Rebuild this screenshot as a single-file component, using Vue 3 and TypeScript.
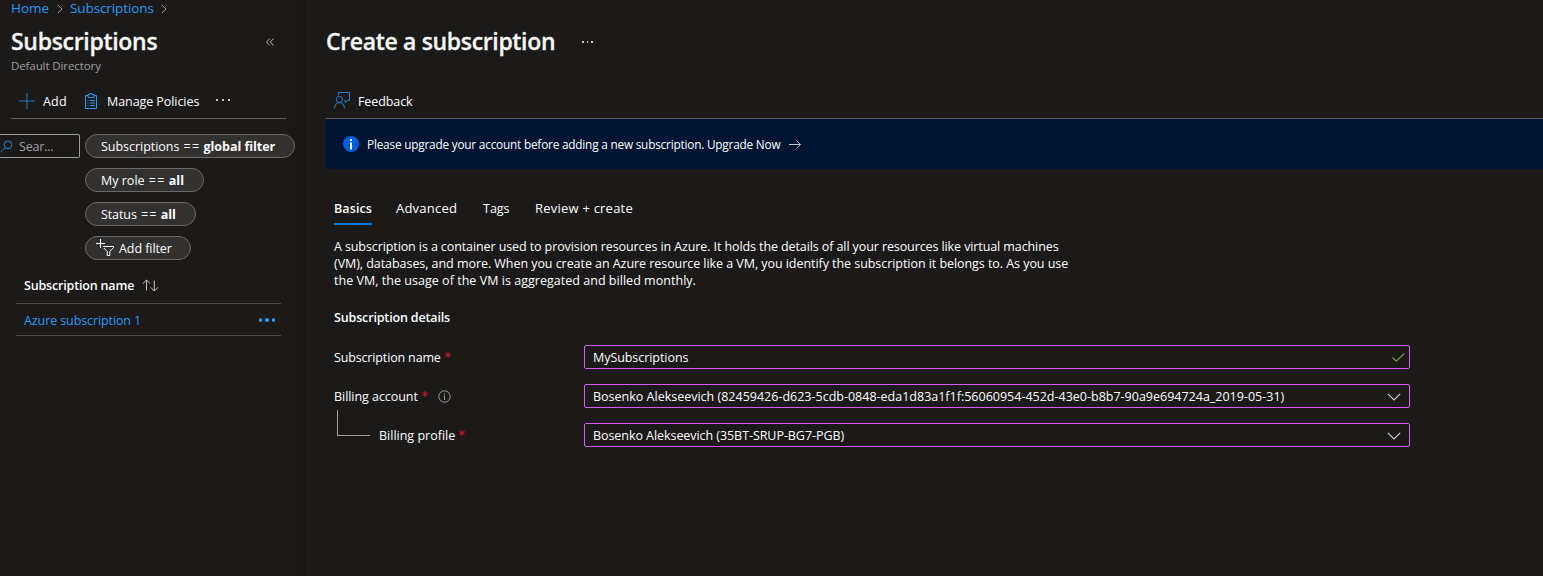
<script setup lang="ts">
interface Filter {
  key: string
  label: string
  value: string
}

interface Field {
  key: string
  label: string
  value: string
  kind: 'text' | 'select'
  info?: boolean
  nested?: boolean
}

const filters: Filter[] = [
  { key: 'subs', label: 'Subscriptions', value: 'global filter' },
  { key: 'role', label: 'My role', value: 'all' },
  { key: 'status', label: 'Status', value: 'all' },
]

const tabs: { key: string; label: string }[] = [
  { key: 'basics', label: 'Basics' },
  { key: 'advanced', label: 'Advanced' },
  { key: 'tags', label: 'Tags' },
  { key: 'review', label: 'Review + create' },
]
const activeTab = 'basics'

const intro: string[] = [
  'A subscription is a container used to provision resources in Azure. It holds the details of all your resources like virtual machines',
  '(VM), databases, and more. When you create an Azure resource like a VM, you identify the subscription it belongs to. As you use',
  'the VM, the usage of the VM is aggregated and billed monthly.',
]

const fields: Field[] = [
  { key: 'name', label: 'Subscription name', value: 'MySubscriptions', kind: 'text' },
  {
    key: 'account',
    label: 'Billing account',
    value: 'Bosenko Alekseevich (82459426-d623-5cdb-0848-eda1d83a1f1f:56060954-452d-43e0-b8b7-90a9e694724a_2019-05-31)',
    kind: 'select',
    info: true,
  },
  { key: 'profile', label: 'Billing profile', value: 'Bosenko Alekseevich (35BT-SRUP-BG7-PGB)', kind: 'select', nested: true },
]
</script>

<template>
  <div class="portal">
    <aside class="side">
      <nav class="crumbs">
        <a class="crumb home">Home</a>
        <svg class="crumb-sep" width="6" height="10" viewBox="0 0 6 10"><path d="M.7 .8 5 5 .7 9.2" /></svg>
        <a class="crumb subs">Subscriptions</a>
        <svg class="crumb-sep" width="6" height="10" viewBox="0 0 6 10"><path d="M.7 .8 5 5 .7 9.2" /></svg>
      </nav>
      <div class="side-head">
        <h1 class="title side-title">Subscriptions</h1>
        <svg class="collapse" width="8" height="8" viewBox="0 0 8 8"><path d="M3.8.5.6 4l3.2 3.5M7.5.5 4.3 4l3.2 3.5" /></svg>
      </div>
      <div class="directory">Default Directory</div>
      <div class="side-tools">
        <svg class="plus" width="16" height="16" viewBox="0 0 16 16"><path d="M8 0v16M0 8h16" /></svg>
        <span class="tool add">Add</span>
        <svg class="clipboard" width="14" height="16" viewBox="0 0 14 16">
          <path d="M4 2.5H1.5v13h11v-13H10M4 4.5v-3h2V.5h2v1h2v3z" />
          <path d="M3.5 7.5h1M6 7.5h5M3.5 10h1M6 10h5M3.5 12.5h1M6 12.5h5" />
        </svg>
        <span class="tool manage">Manage Policies</span>
        <span class="more"><i /><i /><i /></span>
      </div>
      <div class="filter-row">
        <div class="search">
          <svg width="13" height="13" viewBox="0 0 13 13"><circle cx="8" cy="4.8" r="3.9" /><path d="M5.2 7.6.4 12.4" /></svg>
          <span>Sear...</span>
        </div>
        <div class="pills">
          <div v-for="f in filters" :key="f.key" class="pill" :class="f.key">
            <span>{{ f.label }} <span class="eq">==</span> <b>{{ f.value }}</b></span>
          </div>
          <div class="pill add-filter">
            <svg width="19" height="17" viewBox="0 0 19 17">
              <path d="M4.5 0v9M0 4.5h9" />
              <path d="M7.2 7.5h10.3v1.2L13.8 12.5v4h-2.6v-4L7.8 9" />
            </svg>
            <span>Add filter</span>
          </div>
        </div>
      </div>
      <div class="list">
        <div class="list-head">
          <span>Subscription name</span>
          <svg width="17" height="13" viewBox="0 0 17 13"><path d="M4.5 11.5V1M.8 4.7 4.5 1l3.7 3.7M12.3 1.5V12M8.6 8.3l3.7 3.7L16 8.3" /></svg>
        </div>
        <div class="list-row">
          <a>Azure subscription 1</a>
          <span class="row-more"><i /><i /><i /></span>
        </div>
      </div>
    </aside>

    <main class="main">
      <div class="main-head">
        <h1 class="title main-title">Create a subscription</h1>
        <span class="title-more"><i /><i /><i /></span>
      </div>
      <div class="main-tools">
        <svg class="feedback-icon" width="17" height="17" viewBox="0 0 17 17">
          <path d="M4.5 3V.5h11v8h-2L11.3 10.7V8.5h-1" />
          <circle cx="5.5" cy="7.5" r="3.1" />
          <path d="M.5 16.2c.2-3.5 2.2-5.6 5-5.6s4.8 2.1 5 5.6" />
        </svg>
        <span class="tool feedback">Feedback</span>
      </div>
      <div class="banner">
        <svg class="info-badge" width="16" height="16" viewBox="0 0 16 16">
          <circle cx="8" cy="8" r="8" />
          <path d="M7 6.5h2V13.5H7zM7 3h2v2H7z" />
        </svg>
        <span class="banner-text">Please upgrade your account before adding a new subscription. Upgrade Now</span>
        <svg class="arrow" width="12" height="9" viewBox="0 0 12 9"><path d="M0 4.5h11.3M7.5.6l3.9 3.9-3.9 3.9" /></svg>
      </div>
      <div class="content">
        <div class="tabs">
          <span v-for="t in tabs" :key="t.key" class="tab" :class="[t.key, { active: t.key === activeTab }]">{{ t.label }}</span>
        </div>
        <p class="intro">
          <span v-for="(line, i) in intro" :key="i" class="line" :class="'line-' + (i + 1)">{{ line }}</span>
        </p>
        <h2 class="section">Subscription details</h2>
        <div class="form">
          <div v-for="f in fields" :key="f.key" class="field" :class="f.key">
            <div class="label">
              <span v-if="f.nested" class="branch" />
              <span class="label-text">{{ f.label }}</span>
              <svg class="star" width="6" height="6" viewBox="0 0 6 6"><path d="M3 0v6M.3 1.5l5.4 3M5.7 1.5l-5.4 3" /></svg>
              <svg v-if="f.info" class="info" width="13" height="13" viewBox="0 0 13 13">
                <circle cx="6.5" cy="6.5" r="5.7" />
                <path d="M6.5 5.5V10M6.5 3.3v1.2" />
              </svg>
            </div>
            <div class="input">
              <span class="value">{{ f.value }}</span>
              <svg v-if="f.kind === 'text'" class="check" width="13" height="9" viewBox="0 0 13 9"><path d="M.6 4.5l3.6 3.6L12.2.6" /></svg>
              <svg v-else class="chevron" width="14" height="8" viewBox="0 0 14 8"><path d="M.8.8 7 7 13.2.8" /></svg>
            </div>
          </div>
        </div>
      </div>
    </main>
  </div>
</template>

<style>
body {
  background: #1b1a19;
}
</style>

<style scoped>
* {
  box-sizing: border-box;
}
.portal {
  display: flex;
  width: 1543px;
  height: 576px;
  overflow: hidden;
  background: #1b1a19;
  color: #fff;
  font: 12.5px/17px "Open Sans", "Noto Sans", sans-serif;
  white-space: nowrap;
}
svg {
  display: block;
  flex: none;
  fill: none;
  stroke: currentColor;
  stroke-width: 1;
}
h1, h2, p {
  margin: 0;
}
.side {
  width: 306px;
  flex: none;
  background: linear-gradient(to right, #1b1a19 290px, #161514 306px);
}
.crumbs {
  display: flex;
  align-items: center;
  height: 18px;
  padding-left: 11px;
  color: #2899f5;
  font-size: 13.5px;
}
.crumb { margin-top: -2px; letter-spacing: -0.1px; }
.crumb.home { width: 46px; letter-spacing: 0; }
.crumb.subs { width: 91px; }
.crumb-sep {
  color: #a19f9d;
  margin-right: 7px;
}
.side-head {
  display: flex;
  align-items: center;
  height: 40px;
  padding: 6px 0 0 11px;
}
.title {
  font-size: 23px;
  line-height: 32px;
  font-weight: 600;
  color: #f8f7f6;
  -webkit-text-stroke: 0.3px currentColor;
}
.side-title { width: 255px; letter-spacing: -0.3px; }
.collapse { color: #b3b0ad; margin-top: 1px; }
.directory {
  height: 17px;
  padding-left: 11px;
  margin-top: -1px;
  margin-bottom: 1px;
  font-size: 11.5px;
  letter-spacing: -0.1px;
  color: #a19f9d;
}
.side-tools {
  display: flex;
  align-items: center;
  width: 275px;
  height: 44px;
  margin-left: 11px;
  padding: 9px 0 0 8px;
  border-bottom: 1px solid #605e5c;
}
.plus { color: #2477bd; margin-right: 8px; }
.add { width: 41px; letter-spacing: 0.2px; }
.clipboard { color: #2899f5; margin-right: 9px; }
.manage { width: 109px; letter-spacing: -0.07px; }
.more i, .title-more i, .row-more i {
  width: 2px;
  height: 2px;
  background: #c8c6c4;
}
.more, .title-more, .row-more {
  display: flex;
  gap: 4px;
}
.more { margin-top: -2px; }
.filter-row {
  display: flex;
  align-items: flex-start;
  gap: 5px;
  padding-top: 15px;
}
.search {
  display: flex;
  align-items: center;
  width: 80px;
  height: 24px;
  border: 1px solid #a19f9d;
  border-left: 0;
  border-radius: 0 2px 2px 0;
  color: #a19f9d;
}
.search svg { color: #2684d3; margin-right: 6px; }
.search span { letter-spacing: -0.2px; }
.pills {
  display: flex;
  flex-direction: column;
  gap: 10px;
}
.pill {
  display: flex;
  align-items: center;
  height: 24px;
  padding-left: 15px;
  border: 1px solid #6b6967;
  border-radius: 12px;
  background: #323130;
}
.eq { margin: 0 0 0 1px; letter-spacing: 1.2px; }
.pill.subs { width: 210px; letter-spacing: -0.03px; }
.pill.role { width: 119px; }
.pill.status { width: 111px; letter-spacing: -0.1px; }
.pill.add-filter { width: 106px; padding-left: 10px; }
.add-filter svg { margin-right: 4px; margin-top: -2px; }
.add-filter span { letter-spacing: -0.07px; }
.list {
  width: 265px;
  margin-left: 16px;
  padding-top: 8px;
}
.list-head {
  display: flex;
  align-items: center;
  height: 36px;
  padding-left: 8px;
  border-bottom: 1px solid #484644;
  font-weight: 600;
}
.list-head span { width: 117.5px; letter-spacing: -0.17px; }
.list-head svg { color: #c8c6c4; }
.list-row {
  display: flex;
  align-items: center;
  justify-content: space-between;
  height: 32px;
  padding: 1px 6px 0 8px;
  border-bottom: 1px solid #484644;
  color: #2899f5;
}
.list-row a { letter-spacing: -0.1px; }
.row-more { gap: 3px; }
.row-more i {
  width: 3.5px;
  height: 3.5px;
  border-radius: 50%;
  background: #2899f5;
}
.main {
  flex: 1;
  padding-left: 20px;
}
.main-head {
  display: flex;
  align-items: center;
  height: 58px;
  padding-top: 24px;
}
.main-title { width: 256px; letter-spacing: -0.34px; }
.title-more { gap: 3px; margin-top: 2px; }
.title-more i { width: 1.5px; height: 1.5px; }
.main-tools {
  display: flex;
  align-items: center;
  height: 61px;
  padding: 27px 0 0 8px;
  border-bottom: 1px solid #605e5c;
}
.feedback-icon { color: #2684d3; margin: -2px 7px 0 0; }
.feedback { letter-spacing: -0.1px; }
.banner {
  display: flex;
  align-items: center;
  height: 50px;
  padding-left: 17px;
  background: #001433;
}
.info-badge { stroke: none; margin-right: 8px; }
.info-badge circle { fill: #015cda; }
.info-badge path { fill: #fff; }
.banner-text { width: 422px; font-size: 11.8px; letter-spacing: -0.2px; }
.arrow { color: #c8c6c4; }
.content {
  padding: 28px 0 0 8px;
}
.tabs {
  display: flex;
  gap: 24px;
}
.tab { height: 28px; padding-top: 3px; }
.tab.basics { width: 38px; letter-spacing: 0.1px; }
.tab.advanced { width: 63px; }
.tab.tags { width: 28px; }
.tab.advanced, .tab.review {
  font-size: 13px;
  letter-spacing: 0.22px;
}
.tab.active {
  font-weight: 600;
  border-bottom: 2px solid #0078d4;
}
.intro { padding-top: 13px; }
.intro .line {
  display: block;
  height: 17px;
}
.line-1 { letter-spacing: -0.1px; }
.line-2 { letter-spacing: -0.055px; }
.line-3 { letter-spacing: 0.03px; }
.section {
  padding-top: 20px;
  font-size: 12.5px;
  line-height: 17px;
  font-weight: 600;
  letter-spacing: -0.15px;
}
.form {
  display: flex;
  flex-direction: column;
  gap: 15px;
  padding-top: 19px;
}
.field {
  display: flex;
  height: 24px;
}
.label {
  display: flex;
  align-items: center;
  width: 250px;
}
.account .label-text { letter-spacing: -0.05px; }
.name .label-text { letter-spacing: -0.15px; }
.star { color: #d8152a; margin: -5px 0 0 4px; }
.info { color: #a19f9d; margin: 1px 0 0 10px; }
.branch {
  width: 33px;
  height: 26px;
  margin: -24px 9px 0 3px;
  border: solid #a19f9d;
  border-width: 0 0 1px 1px;
}
.input {
  display: flex;
  align-items: center;
  justify-content: space-between;
  width: 826px;
  padding: 0 8px;
  border: 1px solid #d65bf5;
  border-radius: 2px;
}
.name .value, .profile .value { letter-spacing: -0.06px; }
.check { color: #7ba83a; margin-right: -4px; stroke-width: 1.2; }
.chevron { color: #d2d0ce; stroke-width: 1.2; margin: 1px 0 0; }
</style>
